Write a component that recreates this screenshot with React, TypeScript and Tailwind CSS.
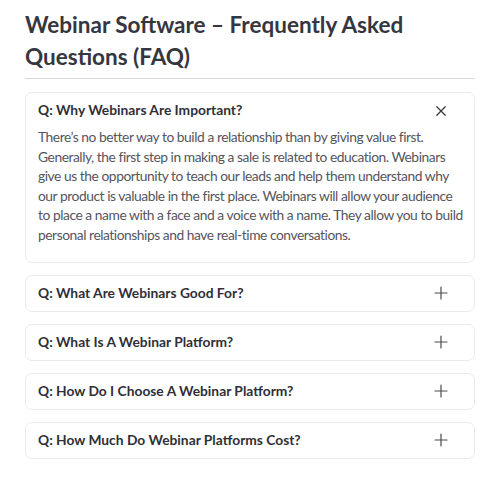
import { useState } from 'react';

type Faq = {
  question: string;
  answer?: string;
};

const faqs: Faq[] = [
  {
    question: 'Q: Why Webinars Are Important?',
    answer:
      'There’s no better way to build a relationship than by giving value first. Generally, the first step in making a sale is related to education. Webinars give us the opportunity to teach our leads and help them understand why our product is valuable in the first place. Webinars will allow your audience to place a name with a face and a voice with a name. They allow you to build personal relationships and have real-time conversations.',
  },
  { question: 'Q: What Are Webinars Good For?' },
  { question: 'Q: What Is A Webinar Platform?' },
  { question: 'Q: How Do I Choose A Webinar Platform?' },
  { question: 'Q: How Much Do Webinar Platforms Cost?' },
];

const CloseIcon = () => (
  <svg width="14" height="14" viewBox="0 0 14 14" fill="none" stroke="#3a3a44" strokeWidth="1.3" strokeLinecap="round">
    <path d="M2.8 2.8 L11.2 11.2 M11.2 2.8 L2.8 11.2" />
  </svg>
);

const PlusIcon = () => (
  <svg width="14" height="14" viewBox="0 0 14 14" fill="none" stroke="#4a4a52" strokeWidth="1.2" strokeLinecap="round">
    <path d="M7 1 V13 M1 7 H13" />
  </svg>
);

const FaqItem = ({ faq, open, onToggle }: { faq: Faq; open: boolean; onToggle: () => void }) => (
  <div className="rounded-[7px] border border-[#ebebed] bg-white">
    <button
      onClick={onToggle}
      className="flex w-full items-center justify-between pl-[12px] pr-[26px] h-[35px] text-left"
    >
      <span className="text-[13.8px] font-bold text-[#2f2f38]">{faq.question}</span>
      {open ? <CloseIcon /> : <PlusIcon />}
    </button>
    {open && faq.answer && (
      <p className="-mt-[1px] pl-[12px] pr-[10px] pb-[17px] text-[13.8px] tracking-[-0.45px] leading-[19.6px] text-[#55555d]">
        {faq.answer}
      </p>
    )}
  </div>
);

export default function App() {
  const [openIndex, setOpenIndex] = useState<number | null>(0);

  return (
    <div className="min-h-[480px] bg-white px-[25px] pt-[9px] font-['Lato',sans-serif]">
      <h1 className="text-[22.5px] font-bold leading-[32px] text-[#36363f] pb-[5px] border-b border-[#d8d8dc]">
        Webinar Software – Frequently Asked Questions (FAQ)
      </h1>
      <div className="mt-[13px] flex flex-col gap-[12px]">
        {faqs.map((faq, i) => (
          <FaqItem
            key={faq.question}
            faq={faq}
            open={openIndex === i}
            onToggle={() => setOpenIndex(openIndex === i ? null : i)}
          />
        ))}
      </div>
    </div>
  );
}
